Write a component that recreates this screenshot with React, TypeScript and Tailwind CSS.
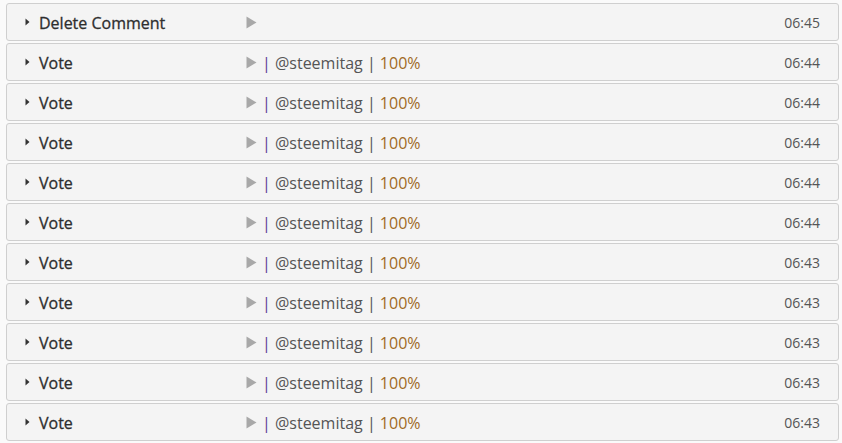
import React from 'react';

type Row = { title: string; time: string; vote?: boolean };

const ROWS: Row[] = [
  { title: 'Delete Comment', time: '06:45' },
  { title: 'Vote', time: '06:44', vote: true },
  { title: 'Vote', time: '06:44', vote: true },
  { title: 'Vote', time: '06:44', vote: true },
  { title: 'Vote', time: '06:44', vote: true },
  { title: 'Vote', time: '06:44', vote: true },
  { title: 'Vote', time: '06:43', vote: true },
  { title: 'Vote', time: '06:43', vote: true },
  { title: 'Vote', time: '06:43', vote: true },
  { title: 'Vote', time: '06:43', vote: true },
  { title: 'Vote', time: '06:43', vote: true },
];

function Caret() {
  return (
    <svg width="5" height="8" viewBox="0 0 5 8" className="shrink-0">
      <path d="M0.5 0.5 L4.5 4 L0.5 7.5 Z" fill="#333" />
    </svg>
  );
}

function Play() {
  return (
    <svg width="11" height="13" viewBox="0 0 11 13" className="shrink-0">
      <path d="M0.5 0.5 L10.5 6.5 L0.5 12.5 Z" fill="#a8a8a8" />
    </svg>
  );
}

export default function App() {
  return (
    <div
      className="min-h-screen bg-[#fafafa] pl-[6px] pr-[3px] pt-[3px]"
      style={{ fontFamily: '"Open Sans", "Liberation Sans", sans-serif' }}
    >
      <div className="flex flex-col gap-[2px]">
        {ROWS.map((r, i) => (
          <div
            key={i}
            className="flex h-[38px] items-center rounded-[3px] border border-[#cfcfcf] bg-[#f4f4f4] pl-[18px] pr-[18px]"
          >
            <Caret />
            <div className="ml-[9px] w-[207px] pt-px text-[16px] text-[#2e2e2e] [-webkit-text-stroke:0.3px_#2e2e2e]">
              {r.title}
            </div>
            <div className="flex flex-1 items-center pt-px text-[16px] text-[#555]">
              <Play />
              {r.vote && (
                <span className="ml-[5px]">
                  <span className="text-[#5e3c94]">|</span> @steemitag |{' '}
                  <span className="text-[#a06a24]">100%</span>
                </span>
              )}
            </div>
            <div className="pt-px text-[14px] text-[#555]">{r.time}</div>
          </div>
        ))}
      </div>
    </div>
  );
}
